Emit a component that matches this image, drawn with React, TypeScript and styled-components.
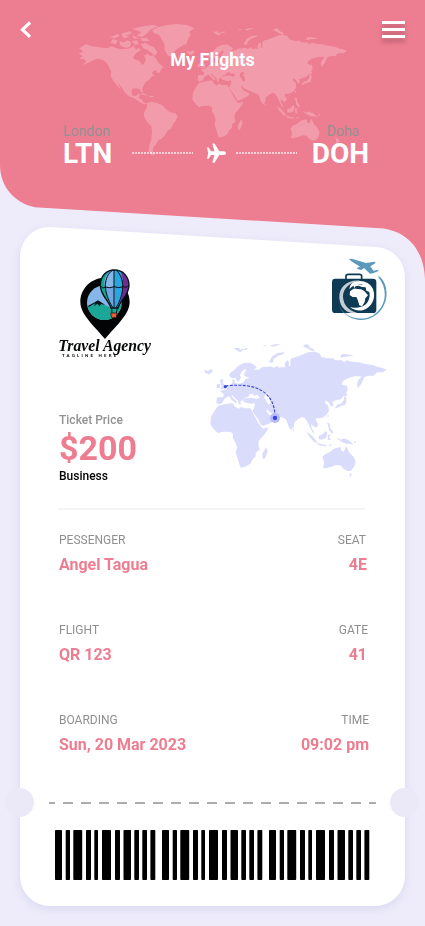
import React from 'react';
import styled, { createGlobalStyle } from 'styled-components';

const PINK = '#ed7d90';

const GlobalStyle = createGlobalStyle`
  * { box-sizing: border-box; }
  body { margin: 0; background: #eeecfa; font-family: Roboto, "Liberation Sans", sans-serif; }
  svg { display: block; }
`;

const Screen = styled.main`
  width: 425px;
  height: 926px;
  overflow: hidden;
  background: #eeecfa;
`;

const Header = styled.header`
  position: relative;
  height: 279px;
  background: ${PINK};
  clip-path: path('M0 0H425V279C424 249 406 228.5 376 228L35 207.300C15 203 0 187 0 165Z');
`;

const MapBackdrop = styled.div`
  position: absolute;
  inset: 0;
`;

const HeaderContent = styled.div`
  position: relative;
  display: flex;
  flex-direction: column;
`;

const TopBar = styled.nav`
  display: flex;
  justify-content: space-between;
  align-items: flex-start;
  padding: 21px 20px 0;
  height: 49px;
`;

const IconButton = styled.button`
  border: 0;
  padding: 0;
  background: none;
  color: #fff;
`;

const Bars = styled.span`
  display: flex;
  flex-direction: column;
  gap: 4px;
  width: 23px;
  filter: drop-shadow(0 4px 2px rgba(0, 0, 0, 0.25));
`;

const Bar = styled.span`
  height: 3px;
  background: #fff;
`;

const Title = styled.h1`
  margin: 0;
  height: 21px;
  font-size: 18px;
  line-height: 21px;
  font-weight: 700;
  color: #fff;
  text-align: center;
`;

const Route = styled.div`
  display: flex;
  justify-content: space-between;
  align-items: flex-end;
  padding: 0 56px 0 63px;
  margin-top: 53px;
`;

const Stop = styled.div`
  display: flex;
  flex-direction: column;
`;

const City = styled.span<{ $indent?: number }>`
  padding-left: ${(p) => p.$indent ?? 0}px;
  font-size: 14px;
  line-height: 16px;
  color: #969091;
`;

const Code = styled.span`
  font-size: 28px;
  line-height: 29px;
  font-weight: 700;
  color: #fff;
`;

const Leg = styled.div`
  display: flex;
  align-items: center;
  gap: 10px;
  height: 30px;
  margin-left: 6px;
`;

const Dots = styled.span`
  width: 61px;
  height: 2px;
  background: repeating-linear-gradient(90deg, rgba(255,255,255,.65) 0 2px, transparent 2px 3px);
`;

const Ticket = styled.section`
  position: relative;
  width: 385px;
  height: 680px;
  margin: -53px 20px 0;
`;

const PaperShadow = styled.div`
  filter: drop-shadow(0 3px 4px rgba(130, 140, 210, 0.2));
`;

const Paper = styled.div`
  display: flex;
  flex-direction: column;
  height: 680px;
  background: #fff;
  clip-path: path('M0 32C0 14 13 1 30 1L355 21C374 22 385 35 385 52V650A30 30 0 0 1 355 680H30A30 30 0 0 1 0 650Z');
`;

const Notch = styled.span<{ $side: 'left' | 'right' }>`
  position: absolute;
  top: 562px;
  ${(p) => p.$side}: ${(p) => (p.$side === 'left' ? -15 : -14)}px;
  width: 29px;
  height: 29px;
  border-radius: 50%;
  background: #ebe9f7;
`;

const Summary = styled.div`
  display: grid;
  grid-template-columns: 143px 200px;
  grid-template-rows: 106px 139px;
  height: 282px;
  padding: 37px 10px 0 32px;
`;

const BagSlot = styled.div`
  justify-self: end;
  margin: -6px 6px 0 0;
`;

const Fare = styled.div`
  display: flex;
  flex-direction: column;
  padding: 44px 0 0 7px;
`;

const FareText = styled.span<{ $tone: string }>`
  font-size: 12px;
  line-height: 14px;
  font-weight: 500;
  color: ${(p) => p.$tone};
`;

const Price = styled.strong`
  padding-top: 1px;
  font-size: 34px;
  line-height: 41px;
  font-weight: 700;
  color: ${PINK};
`;

const MapSlot = styled.div`
  margin-top: -34px;
  width: 200px;
  height: 150px;
`;

const Divider = styled.hr`
  width: 307px;
  height: 2px;
  margin: 0 0 0 38px;
  border: 0;
  background: #f4f4f5;
`;

const Details = styled.div`
  display: flex;
  flex-direction: column;
  padding: 22px 0 0 39px;
`;

const DetailRow = styled.div`
  display: flex;
  justify-content: space-between;
  height: 90px;
`;

const Field = styled.div<{ $end?: boolean }>`
  display: flex;
  flex-direction: column;
  align-items: ${(p) => (p.$end ? 'flex-end' : 'flex-start')};
`;

const Label = styled.span<{ $inset?: number }>`
  padding-right: ${(p) => p.$inset ?? 0}px;
  font-size: 12px;
  line-height: 16px;
  color: #8f8f8f;
`;

const Value = styled.span<{ $inset?: number }>`
  padding-right: ${(p) => p.$inset ?? 0}px;
  margin-top: 7px;
  font-size: 16px;
  line-height: 20px;
  font-weight: 700;
  color: ${PINK};
`;

const RightColumn = styled.div`
  padding-right: 36px;
`;

const TearLine = styled.div`
  flex-shrink: 0;
  width: 327px;
  height: 2px;
  margin: 0 0 26px 29px;
  background: repeating-linear-gradient(90deg, #adadad 0 10.3px, transparent 10.3px 18px) -4px 0 / 400px 2px;
`;

const BarcodeSlot = styled.div`
  margin-left: 35px;
`;

const EURASIA =
  'M66 187L84 187L87 180L80 172L74 168L86 165L96 160L102 153L108 148L113 143L112 134L118 132L120 144L134 146L146 142L152 132L164 128L150 124L146 118L154 106L150 102L140 110L135 120L138 128L132 138L127 140L122 128L112 130L103 124L104 115L118 105L130 92L146 84L166 83L178 90L186 97L176 104L190 104L204 96L216 96L226 94L238 98L246 92L252 98L262 96L269 98L270 84L276 76L281 78L282 94L286 94L286 74L290 70L310 64L325 58L340 52L355 50L372 54L380 66L396 70L414 70L420 76L440 76L448 82L455 76L470 80L490 82L515 88L535 90L548 96L560 98L575 104L564 112L545 112L536 122L520 122L508 126L504 136L498 148L488 160L486 148L490 136L500 124L480 124L462 128L444 138L440 148L452 152L456 166L448 180L438 192L424 196L412 200L415 210L410 216L404 208L400 202L392 196L390 204L400 212L402 228L394 240L382 248L370 250L362 250L364 258L370 268L364 278L354 272L348 266L350 280L358 292L354 294L346 280L338 262L330 250L322 246L310 252L298 262L296 276L288 286L280 272L274 254L268 250L256 246L246 240L236 238L224 232L218 224L213 224L218 234L224 240L234 244L242 250L236 258L222 266L205 272L198 270L190 254L180 240L172 228L176 222L180 210L178 204L168 206L156 204L146 200L144 192L156 190L172 188L185 192L194 188L188 180L176 182L174 176L164 178L160 186L150 188L144 196L136 198L138 208L132 208L128 196L118 188L112 181L109 184L120 194L126 202L122 205L110 194L102 184L96 187L88 192L82 204L72 208L64 204ZM210 180L218 174L224 180L220 186L226 196L226 206L220 208L214 198L208 188Z';

const EAST_LANDS = [
  'M70 212L88 208L110 204L117 208L118 214L132 222L136 216L150 220L166 220L172 230L178 242L188 260L196 272L204 281L220 276L216 288L204 304L192 316L190 330L194 344L182 354L182 364L172 374L166 386L154 394L140 398L136 396L128 372L122 354L126 338L122 324L114 310L114 296L104 290L86 290L68 294L54 280L46 268L48 246L58 228Z',
  'M214 336L218 350L210 370L203 372L202 356L208 346Z',
  'M76 132L86 134L83 143L92 152L90 160L76 164L80 154L76 144Z',
  'M66 148L76 147L74 158L64 160Z',
  'M28 104L38 108L50 102L54 108L44 118L30 114Z',
  'M116 40L132 38L136 44L158 38L156 44L146 44L136 52L124 46Z',
  'M204 30L220 33L208 34ZM224 32L240 28L258 27L244 32L234 35Z',
  'M222 80L232 64L248 54L266 52L268 56L250 62L236 72L234 82L230 84Z',
  'M325 30L338 28L346 38L356 42L360 50L346 46L338 40L326 36Z',
  'M436 60L446 57L476 61L468 64L450 65L438 68Z',
  'M420 218L428 208L438 206L446 196L448 184L454 186L454 200L450 210L436 214L424 220Z',
  'M444 176L450 170L458 180L448 184ZM454 148L458 160L456 174L452 166Z',
  'M396 242L401 238L400 248ZM293 282L298 284L296 292Z',
  'M396 262L404 266L406 278L414 290L412 298L402 286L400 274Z',
  'M334 290L346 298L360 312L368 324L358 322L344 306ZM364 324L384 328L396 331L394 334L372 331Z',
  'M370 304L382 298L392 288L397 294L392 310L380 314L372 312Z',
  'M398 300L410 299L402 305L408 316L398 314ZM400 330L414 328L404 334Z',
  'M426 308L438 314L446 310L462 316L476 330L464 326L452 326L440 320L430 314ZM474 322L484 318L482 324Z',
  'M382 366L390 358L404 352L416 342L426 338L438 336L438 346L446 350L454 334L460 346L464 354L476 366L482 380L478 394L468 408L456 408L444 400L438 392L424 390L408 396L390 400L384 398L388 384Z',
  'M462 416L471 416L466 426Z',
];

const WEST_LANDS = [
  'M28 100L40 92L50 88L64 94L84 96L100 98L112 100L124 94L136 98L150 102L166 102L180 100L190 92L198 104L206 98L212 106L202 112L190 124L192 132L208 138L216 150L222 146L228 134L222 122L234 116L242 124L250 120L258 132L268 146L282 158L276 160L268 174L258 172L264 164L250 168L246 176L256 180L244 186L236 196L226 202L222 210L216 222L220 232L214 232L208 222L196 220L186 222L184 232L188 242L198 242L204 236L210 238L206 248L216 254L222 264L234 266L222 268L208 260L192 250L176 244L164 232L156 218L146 206L140 198L150 218L152 224L138 208L128 194L122 182L124 170L118 158L112 146L104 138L92 132L78 132L62 140L48 146L36 150L50 140L42 132L28 132L38 124L26 114L40 110Z',
  'M212 88L226 84L240 92L252 96L262 112L256 122L244 114L234 106L220 100Z',
  'M148 78L162 82L172 76L184 82L180 96L166 98L152 92Z',
  'M128 72L142 76L138 88L122 84ZM186 78L200 76L206 86L196 90Z',
  'M186 42L220 34L250 30L266 34L240 44L232 54L216 66L200 62L214 52L200 46Z',
  'M120 66L142 58L150 62L134 70ZM154 56L180 48L186 54L168 62L178 66L160 70ZM188 60L198 66L206 72L190 70ZM212 70L230 68L238 78L216 78Z',
  'M246 46L266 36L290 30L320 27L350 30L374 40L358 50L362 60L354 72L350 86L334 94L318 104L308 116L302 126L292 120L284 104L284 88L276 74L268 60L252 54Z',
  'M232 264L244 260L260 264L276 270L288 282L300 292L314 294L323 302L318 316L310 326L304 340L292 348L284 362L274 372L266 374L258 388L250 396L248 408L254 420L244 420L236 408L238 392L244 372L246 350L244 334L232 322L222 304L222 292L230 280Z',
  'M208 236L222 235L234 242L224 241ZM236 242L248 243L254 246L240 247Z',
  'M48 232L54 236L50 235Z',
];

function EastMap() {
  return (
    <>
      <path d={EURASIA} fillRule="evenodd" />
      {EAST_LANDS.map((d) => (
        <path key={d} d={d} />
      ))}
    </>
  );
}

function WorldMap() {
  return (
    <svg width="425" height="279" viewBox="0 0 425 279" fill="#f29cab">
      <g transform="translate(70 15) scale(.3333)">
        {WEST_LANDS.map((d) => (
          <path key={d} d={d} />
        ))}
      </g>
      <g transform="translate(178.9 20.1) scale(.2919 .2952)">
        <EastMap />
        <path d="M536 394L544 404L552 408L542 418L530 428L540 412Z" />
      </g>
    </svg>
  );
}

function RouteMap() {
  return (
    <svg width="200" height="150" viewBox="0 0 600 450">
      <g fill="#dadcfc">
        <EastMap />
      </g>
      <path d="M91 153C180 142 236 168 240 240" fill="none" stroke="#3d49e6" strokeWidth="3.4" strokeDasharray="9 4" />
      <circle cx="91" cy="155" r="5" fill="#3d49e6" />
      <circle cx="240" cy="249" r="15" fill="#b7bcf8" />
      <circle cx="240" cy="249" r="6.500" fill="#3542ee" />
    </svg>
  );
}

function AgencyLogo() {
  return (
    <svg width="110" height="105" viewBox="36 24 330 315">
      <defs>
        <clipPath id="lens">
          <circle cx="193" cy="143" r="52" />
        </clipPath>
        <clipPath id="envelope">
          <path d="M223 45C249 45 267 65 267 91C267 121 242 134 234 159H213C205 135 181 120 181 91C181 64 198 45 223 45Z" />
        </clipPath>
      </defs>
      <path d="M195 68C236 68 269 100 269 141C269 179 225 215 195 252C165 215 121 179 121 141C121 100 154 68 195 68Z" fill="#030405" />
      <g clipPath="url(#lens)">
        <path d="M130 80H260V200H130Z" fill="#86b7e8" />
        <path d="M136 158L163 145L174 138L193 149L210 157L250 148V204H136Z" fill="#1ba796" />
        <path d="M142 154L164 142L174 136L196 150L183 147L179 154L172 146L163 153L165 145L148 155Z" fill="#0b1720" />
      </g>
      <g clipPath="url(#envelope)">
        <path d="M178 42H270V162H178Z" fill="#29a5df" />
        <path d="M178 42H206C190 70 197 128 216 160H178Z" fill="#17a491" />
        <path d="M223 42C194 58 189 80 196 97H222Z" fill="#86b7e8" />
        <path d="M240 42H270V160H231C249 130 255 77 240 42Z" fill="#6f2c91" />
        <path d="M196 97L216 160H224V97Z" fill="#70a6df" />
      </g>
      <g fill="none" stroke="#071016" strokeWidth="4">
        <path d="M223 45C249 45 267 65 267 91C267 121 242 134 234 159H213C205 135 181 120 181 91C181 64 198 45 223 45Z" />
        <path d="M222 45V159M218 45C190 66 188 110 218 157M228 45C257 70 252 118 229 157M181 91Q188 103 196 96Q210 101 222 95Q236 101 250 95Q260 101 267 91" strokeWidth="3" />
        <path d="M215 160L216 174M232 160L229 174" strokeWidth="3" />
      </g>
      <path d="M212 174H231L229 188H215Z" fill="#f15a2b" stroke="#111" strokeWidth="2" />
      <text x="55" y="288" fontFamily="'Liberation Serif', serif" fontStyle="italic" fontWeight="700" fontSize="50" textLength="278" lengthAdjust="spacingAndGlyphs" fill="#08090a">Travel Agency</text>
      <text x="66" y="306" fontFamily="Lato, sans-serif" fontWeight="900" fontSize="13" textLength="163" lengthAdjust="spacing" fill="#111">TAGLINE HERE</text>
    </svg>
  );
}

function BagLogo() {
  return (
    <svg width="60" height="65" viewBox="87 37 180 195">
      <path d="M138 103V94Q138 89 145 89H178Q185 89 185 95V103" fill="none" stroke="#0f3a54" strokeWidth="5" />
      <rect x="96" y="102" width="133" height="103" rx="10" fill="#0f3a54" />
      <path d="M118 160C116 125 145 104 181 108C150 111 129 130 129 156C130 184 152 204 184 206C145 213 120 192 118 160Z" fill="#fff" opacity=".75" />
      <path d="M160 113C182 103 209 111 219 133C229 160 216 188 190 196C176 200 160 196 150 188C168 192 192 188 203 172C215 152 208 130 192 122C176 114 158 120 148 134C149 125 153 117 160 113Z" fill="#fff" />
      <path d="M160 122L171 118L184 121L197 119L207 132L208 142L199 138L197 130L185 129L175 127L164 132Z" fill="#fff" />
      <path d="M150 140L161 132L183 134L193 139L204 152L196 161L194 172L186 185L178 182L173 165L169 157L158 157L149 151Z" fill="#fff" />
      <path d="M166 125L176 123L186 127L197 128L198 135L184 132L174 129L163 131Z" fill="#0f3a54" />
      <path d="M236 94C261 111 266 153 252 181C232 223 183 239 145 215C132 207 122 196 118 184C136 221 184 231 217 213C258 190 267 135 235 98Z" fill="#5b9abd" />
      <path d="M147 43L155 42L198 55L224 51Q230 52 222 58L211 65L220 78L236 75L234 80L219 86L210 87L192 70L184 76L172 73L171 69L180 66L153 49Z" fill="#5b9abd" />
    </svg>
  );
}

const BAR_PATTERN: [number, number][] = [
  [0, 7], [10.7, 4.3], [18.3, 8.9], [31, 5], [39.3, 3.7], [47, 9], [60, 5], [68.5, 7.5], [79.300, 4.700], [87.300, 4.700], [95.400, 4.900],
];

function Barcode() {
  return (
    <svg width="315" height="50" viewBox="0 0 315 50">
      {[0, 107, 214].flatMap((offset) =>
        BAR_PATTERN.map(([x, w]) => <rect key={offset + x} x={offset + x} width={w} height="50" rx=".8" fill="#000" />),
      )}
    </svg>
  );
}

const ROWS = [
  { left: ['PESSENGER', 'Angel Tagua'], right: ['SEAT', '4E'], insets: [3, 2] },
  { left: ['FLIGHT', 'QR 123'], right: ['GATE', '41'], insets: [1, 2] },
  { left: ['BOARDING', 'Sun, 20 Mar 2023'], right: ['TIME', '09:02 pm'], insets: [0, 0] },
];

export default function App() {
  return (
    <Screen>
      <GlobalStyle />
      <Header>
        <MapBackdrop>
          <WorldMap />
        </MapBackdrop>
        <HeaderContent>
          <TopBar>
            <IconButton aria-label="Back">
              <svg width="12" height="18" viewBox="0 0 12 18">
                <path d="M10 1.500L2.500 8.700L10 15.900" fill="none" stroke="currentColor" strokeWidth="3.200" />
              </svg>
            </IconButton>
            <IconButton aria-label="Menu">
              <Bars>
                <Bar />
                <Bar />
                <Bar />
              </Bars>
            </IconButton>
          </TopBar>
          <Title>My Flights</Title>
          <Route>
            <Stop>
              <City>London</City>
              <Code>LTN</Code>
            </Stop>
            <Leg>
              <Dots />
              <svg width="23" height="22" viewBox="-2 0 23 22" fill="#fff">
                <path d="M2 5.500H3.500L6 9.300H9.500L7.300 1.500H9.500L14.300 9.300H19Q21 9.800 21 11.200Q21 12.600 19 13H14.300L9.500 20.800H7.300L9.500 13H6L3.500 16.800H2L3.200 11.200Z" />
              </svg>
              <Dots />
            </Leg>
            <Stop>
              <City $indent={15}>Doha</City>
              <Code>DOH</Code>
            </Stop>
          </Route>
        </HeaderContent>
      </Header>
      <Ticket>
        <PaperShadow>
          <Paper>
            <Summary>
              <AgencyLogo />
              <BagSlot>
                <BagLogo />
              </BagSlot>
              <Fare>
                <FareText $tone="#929292">Ticket Price</FareText>
                <Price>$200</Price>
                <FareText $tone="#000">Business</FareText>
              </Fare>
              <MapSlot>
                <RouteMap />
              </MapSlot>
            </Summary>
            <Divider />
            <Details>
              {ROWS.map(({ left, right, insets }) => (
                <DetailRow key={left[0]}>
                  <Field>
                    <Label>{left[0]}</Label>
                    <Value>{left[1]}</Value>
                  </Field>
                  <RightColumn>
                    <Field $end>
                      <Label $inset={insets[0]}>{right[0]}</Label>
                      <Value $inset={insets[1]}>{right[1]}</Value>
                    </Field>
                  </RightColumn>
                </DetailRow>
              ))}
            </Details>
            <TearLine />
            <BarcodeSlot>
              <Barcode />
            </BarcodeSlot>
          </Paper>
        </PaperShadow>
        <Notch $side="left" />
        <Notch $side="right" />
      </Ticket>
    </Screen>
  );
}
